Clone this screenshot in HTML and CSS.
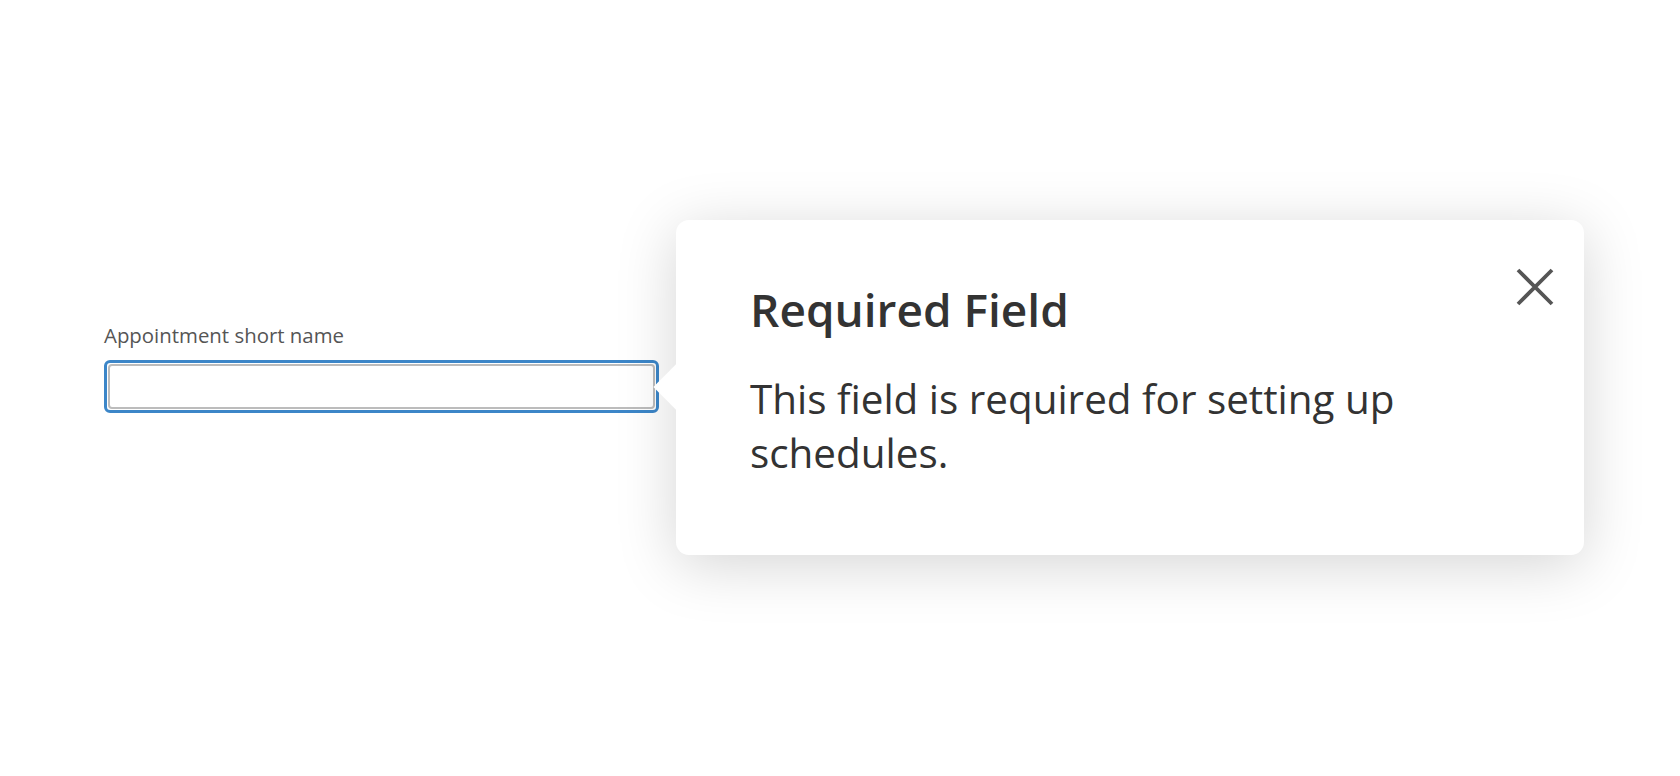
FILE: index.html
```html
<!DOCTYPE html>
<html lang="en">
<head>
<meta charset="utf-8">
<title>Required Field</title>
<link rel="stylesheet" href="styles.css">
</head>
<body>
<main class="stage">
  <div class="field">
    <label class="field-label" for="short-name">Appointment short name</label>
    <div class="field-ring">
      <input class="field-input" id="short-name" type="text">
    </div>
  </div>
  <section class="tip" role="dialog" aria-labelledby="tip-title">
    <span class="tip-arrow" aria-hidden="true"></span>
    <button class="tip-close" type="button" aria-label="Close">
      <svg viewBox="0 0 38 38" width="38" height="38" aria-hidden="true">
        <path d="M2 2 L36 36 M36 2 L2 36" stroke="#555" stroke-width="3.8" fill="none"/>
      </svg>
    </button>
    <h2 class="tip-title" id="tip-title">Required Field</h2>
    <p class="tip-body">This field is required for setting up schedules.</p>
  </section>
</main>
</body>
</html>
```

FILE: styles.css
```css
html, body {
  margin: 0;
  padding: 0;
  background: #ffffff;
}

body {
  font-family: "Open Sans", "Noto Sans", "Liberation Sans", sans-serif;
  color: #333333;
  width: 1680px;
  height: 776px;
  overflow: hidden;
}

.stage {
  display: flex;
  align-items: flex-start;
  gap: 17px;
  padding: 220px 0 0 104px;
}

.field {
  display: flex;
  flex-direction: column;
  margin-top: 103px;
}

.field-label {
  font-size: 20.4px;
  line-height: 24px;
  color: #555555;
  margin-bottom: 13px;
}

.field-ring {
  width: 547px;
  height: 45px;
  border: 3px solid #3c86c8;
  border-radius: 6px;
  padding: 1px;
  background: #ffffff;
}

.field-input {
  box-sizing: border-box;
  display: block;
  width: 100%;
  height: 100%;
  margin: 0;
  border: 2px solid #bcbcbc;
  border-radius: 4px;
  outline: none;
  background: #ffffff;
  font: inherit;
}

.tip {
  position: relative;
  box-sizing: border-box;
  width: 908px;
  height: 335px;
  padding: 63px 72px 0 74px;
  background: #ffffff;
  border-radius: 13px;
  box-shadow: 0 10px 60px rgba(0, 0, 0, 0.17);
}

.tip-arrow {
  position: absolute;
  left: -16px;
  top: 151px;
  width: 32px;
  height: 32px;
  background: #ffffff;
  transform: rotate(45deg);
}

.tip-close {
  position: absolute;
  top: 48px;
  right: 30px;
  width: 38px;
  height: 38px;
  padding: 0;
  border: 0;
  background: transparent;
  cursor: pointer;
}

.tip-close svg {
  display: block;
}

.tip-title {
  margin: 0 0 37px;
  font-size: 46px;
  line-height: 52px;
  font-weight: 600;
  color: #333333;
}

.tip-body {
  margin: 0;
  max-width: 740px;
  font-size: 40.4px;
  line-height: 54px;
  color: #333333;
}
```
